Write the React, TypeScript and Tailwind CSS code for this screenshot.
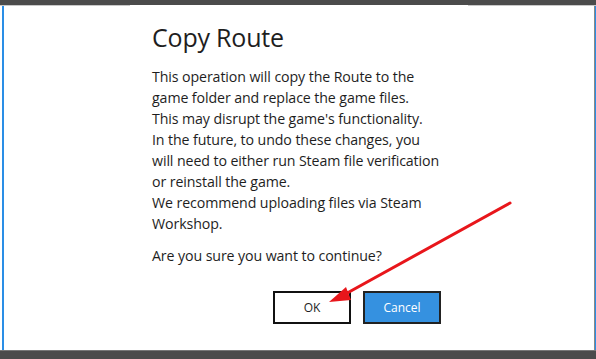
export default function App() {
  const font = { fontFamily: '"Open Sans", "Noto Sans", sans-serif' };
  return (
    <div className="w-[596px] h-[359px] flex flex-col bg-white overflow-hidden relative" style={font}>
      <div className="h-[5px] bg-[#4b4b4b] shrink-0" />
      <div className="h-[1px] flex shrink-0">
        <div className="w-[130px] bg-[#c8c8c8]" />
        <div className="flex-1" />
        <div className="w-[128px] bg-[#c8c8c8]" />
      </div>
      <div className="flex-1 flex">
        <div className="w-[2px] bg-white" />
        <div className="w-[2px] bg-[#2a8ee6]" />
        <div className="flex-1 pl-[148px] pt-[15px] text-[#1e1e1e]">
          <div className="text-[25px] leading-[32px] font-normal tracking-[-0.2px]">Copy Route</div>
          <div className="mt-[13px] text-[14.2px] leading-[21px] tracking-[-0.1px]">
            This operation will copy the Route to the<br />
            game folder and replace the game files.<br />
            This may disrupt the game's functionality.<br />
            In the future, to undo these changes, you<br />
            will need to either run Steam file verification<br />
            or reinstall the game.<br />
            We recommend uploading files via Steam<br />
            Workshop.
            <div className="mt-[11px]">Are you sure you want to continue?</div>
          </div>
          <div className="flex gap-[12px] mt-[25px] pl-[121px]">
            <div className="w-[78px] h-[33px] border-2 border-[#111] bg-white flex items-center justify-center text-[12px] font-medium">OK</div>
            <div className="w-[78px] h-[33px] border-2 border-[#222] bg-[#3591e0] text-white flex items-center justify-center text-[12px] font-medium">Cancel</div>
          </div>
        </div>
        <div className="w-[1px] bg-[#888]" />
        <div className="w-[1px] bg-[#2a8ee6]" />
      </div>
      <div className="h-[9px] bg-[#4b4b4b] shrink-0 border-t border-[#777]" />
      <svg className="absolute left-0 top-0 pointer-events-none" width="596" height="359">
        <line x1="510" y1="203" x2="340" y2="297" stroke="#e8161b" strokeWidth="3" strokeLinecap="round" />
        <polygon points="329,302 346,287 351,300" fill="#e8161b" />
      </svg>
    </div>
  );
}
